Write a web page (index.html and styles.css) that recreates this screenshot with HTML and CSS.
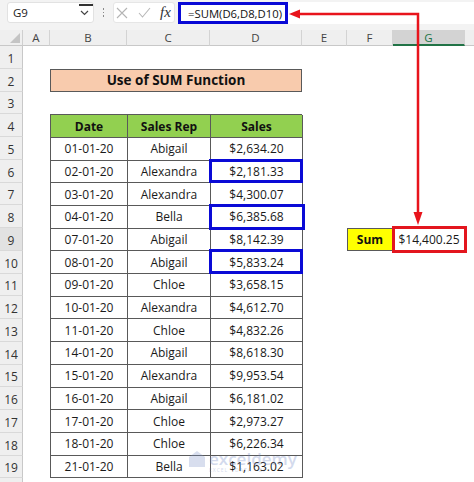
FILE: index.html
```html
<!DOCTYPE html>
<html>
<head>
<meta charset="utf-8">
<link rel="stylesheet" href="styles.css">
</head>
<body>
<div class="app">
  <div class="fbar">
    <div class="namebox">
      <span>G9</span>
      <span class="topmark"></span>
      <svg class="chev" width="9" height="6" viewBox="0 0 9 6"><path d="M1 1 L4.5 4.5 L8 1" fill="none" stroke="#444" stroke-width="1.2"/></svg>
    </div>
    <div class="dots"><i></i><i></i><i></i></div>
    <div class="btns">
      <svg width="12" height="12" viewBox="0 0 12 12"><path d="M1 1 L11 11 M11 1 L1 11" stroke="#b4b4b4" stroke-width="1.1"/></svg>
      <svg width="13" height="11" viewBox="0 0 13 11"><path d="M1 6 L4.5 10 L12 1" fill="none" stroke="#b8b8b8" stroke-width="1.1"/></svg>
      <span class="fx">fx</span>
    </div>
    <div class="formula"><span class="ftext">=SUM(D6,D8,D10)</span></div>
    <div class="frest"></div>
  </div>

  <div class="sheet">
    <div class="corner"><svg width="10" height="10" viewBox="0 0 10 10"><polygon points="10,0 10,10 0,10" fill="#c4c4c4"/></svg></div>
    <div class="ch c2">A</div>
    <div class="ch c3">B</div>
    <div class="ch c4">C</div>
    <div class="ch c5">D</div>
    <div class="ch c6">E</div>
    <div class="ch c7">F</div>
    <div class="ch c8 active">G</div>
    <div class="ch c9"></div>

    <div class="rh">1</div>
    <div class="rh">2</div>
    <div class="rh">3</div>
    <div class="rh">4</div>
    <div class="rh">5</div>
    <div class="rh">6</div>
    <div class="rh">7</div>
    <div class="rh">8</div>
    <div class="rh active">9</div>
    <div class="rh">10</div>
    <div class="rh">11</div>
    <div class="rh">12</div>
    <div class="rh">13</div>
    <div class="rh">14</div>
    <div class="rh">15</div>
    <div class="rh">16</div>
    <div class="rh">17</div>
    <div class="rh">18</div>
    <div class="rh">19</div>
    <div class="rh">20</div>

    <div class="title">Use of SUM Function</div>

    <div class="tablewrap">
      <div class="hd">Date</div><div class="hd">Sales Rep</div><div class="hd">Sales</div>
      <div class="cell">01-01-20</div><div class="cell">Abigail</div><div class="cell">$2,634.20</div>
      <div class="cell">02-01-20</div><div class="cell">Alexandra</div><div class="cell sel">$2,181.33</div>
      <div class="cell">03-01-20</div><div class="cell">Alexandra</div><div class="cell">$4,300.07</div>
      <div class="cell">04-01-20</div><div class="cell">Bella</div><div class="cell sel wide">$6,385.68</div>
      <div class="cell">07-01-20</div><div class="cell">Abigail</div><div class="cell">$8,142.39</div>
      <div class="cell">08-01-20</div><div class="cell">Abigail</div><div class="cell sel">$5,833.24</div>
      <div class="cell">09-01-20</div><div class="cell">Chloe</div><div class="cell">$3,658.15</div>
      <div class="cell">10-01-20</div><div class="cell">Alexandra</div><div class="cell">$4,612.70</div>
      <div class="cell">11-01-20</div><div class="cell">Chloe</div><div class="cell">$4,832.26</div>
      <div class="cell">14-01-20</div><div class="cell">Abigail</div><div class="cell">$8,618.30</div>
      <div class="cell">15-01-20</div><div class="cell">Alexandra</div><div class="cell">$9,953.54</div>
      <div class="cell">16-01-20</div><div class="cell">Abigail</div><div class="cell">$6,181.02</div>
      <div class="cell">17-01-20</div><div class="cell">Chloe</div><div class="cell">$2,973.27</div>
      <div class="cell">18-01-20</div><div class="cell">Chloe</div><div class="cell">$6,226.34</div>
      <div class="cell">21-01-20</div><div class="cell">Bella</div><div class="cell">$1,163.02</div>
    </div>

    <div class="sumlabel">Sum</div>
    <div class="sumvalue">$14,400.25</div>
  </div>

  <svg class="arrow" width="474" height="482" viewBox="0 0 474 482">
    <path d="M298 14 H418 V214" fill="none" stroke="#e8141c" stroke-width="2.5"/>
    <polygon points="289,14 300,9.5 300,18.5" fill="#e8141c"/>
    <polygon points="418,225 413.5,212 422.5,212" fill="#e8141c"/>
  </svg>

  <div class="watermark">
    <svg width="18" height="18" viewBox="0 0 18 18"><polygon points="9,1 17,7 17,17 1,17 1,7" fill="#7f95c8"/></svg>
    <div class="wmtext">
      <span class="wmname">exceldemy</span>
      <span class="wmsub">EXCEL · DATA · BI</span>
    </div>
  </div>
</div>
</body>
</html>
```

FILE: styles.css
```css
html, body {
  margin: 0;
  padding: 0;
  background: #ffffff;
}

.app {
  position: relative;
  width: 474px;
  height: 482px;
  overflow: hidden;
  font-family: "Open Sans", "Noto Sans", sans-serif;
  color: #1a1a1a;
}

/* ---------- formula bar ---------- */
.fbar {
  display: flex;
  align-items: flex-start;
  height: 30px;
  box-sizing: border-box;
  padding: 2px 0 0 7px;
  background: #f3f3f3;
}

.namebox {
  position: relative;
  width: 87px;
  height: 21px;
  box-sizing: border-box;
  background: #ffffff;
  border: 1px solid #e2e2e2;
  border-radius: 3px;
  display: flex;
  align-items: center;
  justify-content: space-between;
  padding: 0 4px 0 5px;
  font-size: 11.5px;
  color: #222;
}

.topmark {
  position: absolute;
  left: 71px;
  top: 1px;
  width: 14px;
  height: 1.5px;
  background: #333;
}

.chev {
  display: block;
}

.dots {
  width: 19px;
  height: 21px;
  display: flex;
  flex-direction: column;
  align-items: center;
  justify-content: center;
  gap: 2px;
}

.dots i {
  display: block;
  width: 1.5px;
  height: 1.5px;
  background: #8a8a8a;
}

.btns {
  width: 62px;
  height: 21px;
  box-sizing: border-box;
  background: #ffffff;
  border: 1px solid #e6e6e6;
  border-radius: 3px;
  display: flex;
  align-items: center;
  gap: 10px;
  padding-left: 2px;
}

.btns svg {
  display: block;
}

.fx {
  font-family: "Liberation Serif", "DejaVu Serif", serif;
  font-style: italic;
  font-size: 15px;
  color: #333;
  line-height: 1;
  margin-left: -1px;
}

.formula {
  margin-left: 3px;
  width: 110px;
  height: 22px;
  box-sizing: border-box;
  border: 3px solid #0a0ad6;
  background: #ffffff;
  display: flex;
  align-items: center;
  padding-left: 7px;
}

.ftext {
  font-size: 11.3px;
  color: #111;
  white-space: nowrap;
}

.frest {
  flex: 1;
  height: 22px;
  background: #ffffff;
}

/* ---------- sheet grid ---------- */
.sheet {
  display: grid;
  grid-template-columns: 23px 27px 77px 83px 92px 45px 46px 72px 1fr;
  grid-template-rows: 16px repeat(20, 22.75px);
  background: #ffffff;
}

.corner {
  grid-row: 1;
  grid-column: 1;
  background: #efefef;
  border-right: 1px solid #cfcfcf;
  border-bottom: 1px solid #c8c8c8;
  box-sizing: border-box;
  display: flex;
  align-items: flex-end;
  justify-content: flex-end;
  padding: 0 2px 2px 0;
}

.ch {
  grid-row: 1;
  background: #efefef;
  border-right: 1px solid #d3d3d3;
  border-bottom: 1px solid #c8c8c8;
  box-sizing: border-box;
  display: flex;
  align-items: center;
  justify-content: center;
  font-size: 11.5px;
  color: #444;
}

.c2 { grid-column: 2; }
.c3 { grid-column: 3; }
.c4 { grid-column: 4; }
.c5 { grid-column: 5; }
.c6 { grid-column: 6; }
.c7 { grid-column: 7; }
.c8 { grid-column: 8; }
.c9 { grid-column: 9; border-right: none; }

.ch.active {
  background: #d3d3d3;
  border-bottom: 2px solid #217346;
  color: #217346;
}

.rh {
  grid-column: 1;
  background: #efefef;
  border-right: 1px solid #c8c8c8;
  border-bottom: 1px solid #d9d9d9;
  box-sizing: border-box;
  display: flex;
  align-items: center;
  justify-content: center;
  font-size: 12px;
  color: #333;
  padding-top: 3px;
}

.rh.active {
  background: #e2e2e2;
  color: #333;
}

/* ---------- title ---------- */
.title {
  grid-row: 3;
  grid-column: 3 / 6;
  background: #f8cbad;
  border: 1px solid #595959;
  box-sizing: border-box;
  display: flex;
  align-items: center;
  justify-content: center;
  font-weight: 700;
  font-size: 13.5px;
  color: #111;
}

/* ---------- data table ---------- */
.tablewrap {
  grid-row: 5 / 21;
  grid-column: 3 / 6;
  display: grid;
  grid-template-columns: 77px 83px 92px;
  grid-template-rows: repeat(16, 1fr);
  border-top: 1px solid #595959;
  border-left: 1px solid #595959;
  box-sizing: border-box;
}

.hd,
.cell {
  border-right: 1px solid #595959;
  border-bottom: 1px solid #595959;
  box-sizing: border-box;
  display: flex;
  align-items: center;
  justify-content: center;
  white-space: nowrap;
  font-size: 12px;
  color: #1a1a1a;
}

.hd {
  background: #92d050;
  font-weight: 700;
  color: #111;
}

.cell.sel {
  position: relative;
}

.cell.sel::after {
  content: "";
  position: absolute;
  left: -2px;
  right: -1px;
  top: -2px;
  bottom: -1px;
  border: 3px solid #0a0ad6;
}

.cell.sel.wide::after {
  right: -3px;
  bottom: -2px;
}

/* ---------- sum ---------- */
.sumlabel {
  grid-row: 10;
  grid-column: 7;
  background: #ffff00;
  border: 1px solid #595959;
  box-sizing: border-box;
  display: flex;
  align-items: center;
  justify-content: center;
  font-weight: 700;
  font-size: 12px;
  color: #111;
}

.sumvalue {
  grid-row: 10;
  grid-column: 8;
  position: relative;
  display: flex;
  align-items: center;
  justify-content: center;
  font-size: 12px;
  color: #1a1a1a;
}

.sumvalue::after {
  content: "";
  position: absolute;
  left: -1px;
  right: -2px;
  top: -2px;
  bottom: -2px;
  border: 3px solid #e3161e;
}

/* ---------- overlays ---------- */
.arrow {
  position: absolute;
  left: 0;
  top: 0;
  pointer-events: none;
}

.watermark {
  position: absolute;
  left: 188px;
  top: 450px;
  display: flex;
  align-items: flex-start;
  gap: 3px;
  opacity: 0.3;
  pointer-events: none;
}

.wmtext {
  display: flex;
  flex-direction: column;
  line-height: 1;
}

.wmname {
  font-size: 17px;
  font-weight: 600;
  color: #6f86c4;
}

.wmsub {
  font-size: 5px;
  letter-spacing: 1px;
  color: #6f86c4;
  margin-top: 1px;
}
```
